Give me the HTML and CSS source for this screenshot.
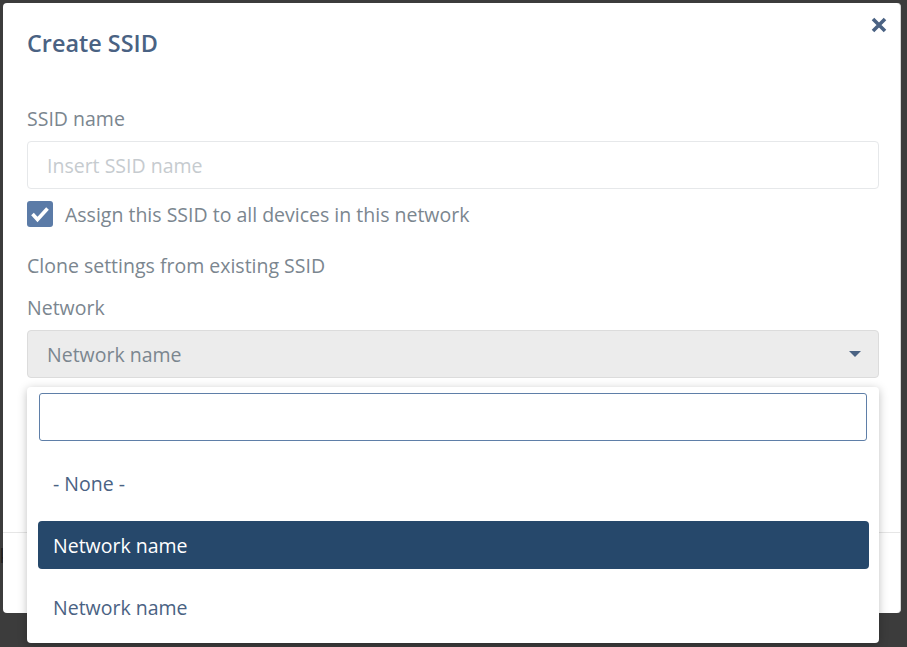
FILE: index.html
```html
<!DOCTYPE html>
<html lang="en">
<head>
<meta charset="utf-8">
<title>Create SSID</title>
<link rel="stylesheet" href="styles.css">
</head>
<body>
<div class="page-behind"><span class="behind-text">Networks</span></div>
<div class="modal">
  <div class="modal-header">
    <h1 class="modal-title">Create SSID</h1>
    <button class="close" aria-label="Close">
      <svg width="18" height="18" viewBox="0 0 18 18"><path d="M3 3 L15 15 M15 3 L3 15" stroke="#4a6283" stroke-width="3.6" stroke-linecap="butt"/></svg>
    </button>
  </div>
  <div class="modal-body">
    <label class="label">SSID name</label>
    <div class="input placeholder">Insert SSID name</div>
    <div class="check-row">
      <span class="checkbox">
        <svg width="26" height="26" viewBox="0 0 26 26"><path d="M5.5 13 L10.5 18.5 L20.5 7.5" fill="none" stroke="#fff" stroke-width="3.6"/></svg>
      </span>
      <span class="check-label">Assign this SSID to all devices in this network</span>
    </div>
    <div class="section-label">Clone settings from existing SSID</div>
    <label class="label label-network">Network</label>
    <div class="select">
      <span>Network name</span>
      <span class="caret"></span>
    </div>
  </div>
  <div class="modal-footer"></div>
</div>
<div class="dropdown">
  <div class="search"></div>
  <ul class="options">
    <li class="option">- None -</li>
    <li class="option active">Network name</li>
    <li class="option">Network name</li>
  </ul>
</div>
</body>
</html>
```
FILE: styles.css
```css
html, body {
  margin: 0;
  padding: 0;
  height: 100%;
}
body {
  background: #3c3c3c;
  font-family: "Open Sans", "Liberation Sans", sans-serif;
  overflow: hidden;
  position: relative;
}
.page-behind {
  position: absolute;
  left: -68px;
  top: 542px;
}
.behind-text {
  font-size: 19.5px;
  color: #1e1e1e;
}
.modal {
  position: absolute;
  left: 3px;
  top: 3px;
  width: 898px;
  height: 610px;
  background: #fff;
  border-radius: 4px;
  display: flex;
  flex-direction: column;
  box-sizing: border-box;
  border-right: 1px solid #d6d6d6;
}
.modal-header {
  padding: 25px 24px 0;
  position: relative;
}
.modal-title {
  margin: 0;
  font-size: 23.4px;
  line-height: 30px;
  font-weight: 600;
  color: #4a6283;
}
.close {
  position: absolute;
  right: 12px;
  top: 13px;
  border: 0;
  background: none;
  padding: 0;
  width: 18px;
  height: 18px;
  display: block;
}
.close svg { display: block; }
.modal-body {
  padding: 49px 21px 0 24px;
  display: flex;
  flex-direction: column;
}
.label {
  font-size: 19.5px;
  line-height: 24px;
  color: #7b868f;
}
.input {
  margin-top: 10px;
  height: 48px;
  box-sizing: border-box;
  border: 1px solid #e6e8ea;
  border-radius: 4px;
  padding: 0 19px;
  display: flex;
  align-items: center;
  font-size: 19.5px;
}
.placeholder { color: #c6cbcf; }
.check-row {
  margin-top: 12px;
  display: flex;
  align-items: center;
  gap: 12px;
  height: 26px;
}
.checkbox {
  width: 26px;
  height: 26px;
  border-radius: 3px;
  background: #5b7ba7;
  display: block;
}
.checkbox svg { display: block; }
.check-label {
  font-size: 19.5px;
  color: #7b868f;
}
.section-label {
  margin-top: 27px;
  font-size: 19.5px;
  line-height: 24px;
  color: #7b868f;
}
.label-network { margin-top: 18px; }
.select {
  margin-top: 10px;
  height: 48px;
  box-sizing: border-box;
  background: #ececec;
  border: 1px solid #dcdcdc;
  border-radius: 4px;
  padding: 0 19px;
  display: flex;
  align-items: center;
  justify-content: space-between;
  font-size: 19.5px;
  color: #7b868f;
}
.caret {
  width: 0;
  height: 0;
  border-left: 6px solid transparent;
  border-right: 6px solid transparent;
  border-top: 6px solid #4a6283;
  margin-right: -2px;
}
.modal-footer {
  margin-top: auto;
  height: 80px;
  border-top: 1px solid #e6e6e6;
}
.dropdown {
  position: absolute;
  left: 27px;
  top: 387px;
  width: 852px;
  height: 256px;
  background: #fff;
  border-radius: 4px;
  box-shadow: 0 2px 10px rgba(0, 0, 0, 0.25);
  box-sizing: border-box;
  padding: 6px 10px 0 11px;
}
.search {
  margin-left: 1px;
  width: 828px;
  height: 48px;
  box-sizing: border-box;
  border: 1px solid #5f7fa8;
  border-radius: 3px;
}
.options {
  list-style: none;
  margin: 18px 0 0;
  padding: 0;
  display: flex;
  flex-direction: column;
  gap: 14px;
}
.option {
  height: 48px;
  border-radius: 4px;
  padding-left: 15px;
  display: flex;
  align-items: center;
  font-size: 19.5px;
  color: #4a6283;
}
.option.active {
  background: #26486b;
  color: #fff;
}
```
